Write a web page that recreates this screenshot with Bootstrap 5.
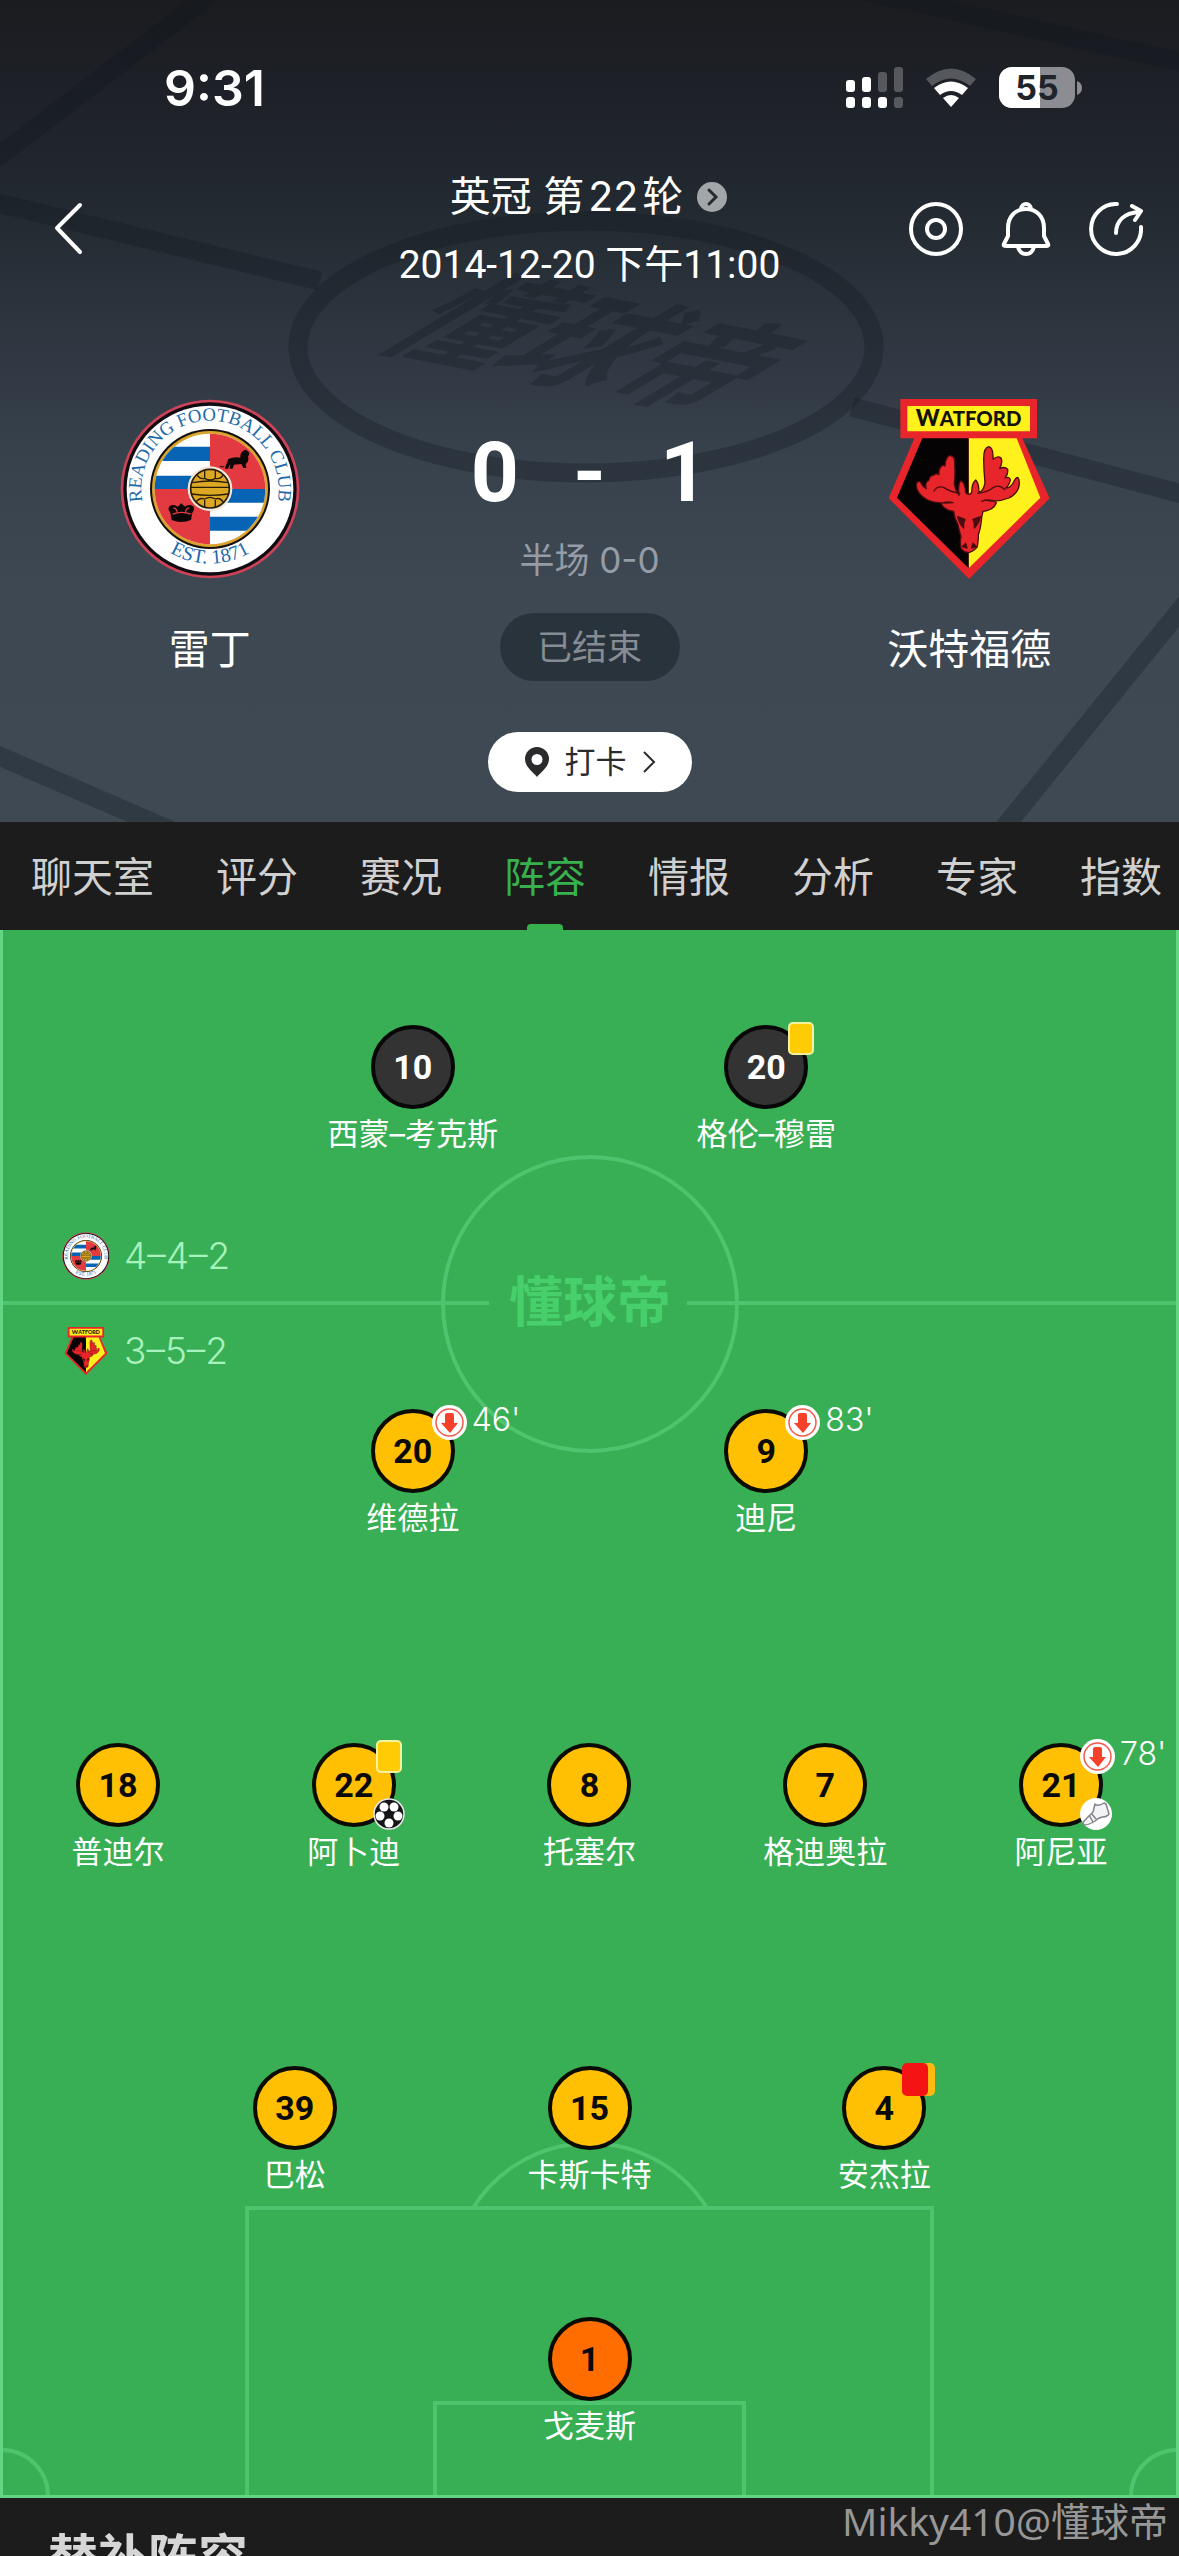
<!DOCTYPE html>
<html lang="zh-CN">
<head>
<meta charset="utf-8">
<meta name="viewport" content="width=device-width, initial-scale=1">
<title>雷丁 0 - 1 沃特福德</title>
<link href="https://cdn.jsdelivr.net/npm/bootstrap@5.3.0/dist/css/bootstrap.min.css" rel="stylesheet">
<style>
  body { background: #1c1c1c; color: #fff; font-family: Inter, "Noto Sans CJK SC", sans-serif; }
  .din { font-family: Roboto, "Noto Sans CJK SC", sans-serif; }

  .match-head { background: linear-gradient(#1a1c20 0, #1e2128 12%, #232a31 26%, #2e3640 41%, #38424d 56%, #3d4853 72%, #3e4954 100%); padding-bottom: 30px; }
  .head-art { position: absolute; inset: 0; width: 100%; height: 100%; }
  .status-bar { padding: 60px 97px 0 164px; height: 116px; }
  .clock { font-size: 50px; font-weight: 600; line-height: 56px; }
  .title-bar { margin-top: 44px; height: 138px; padding: 0 36px 0 48px; }
  .wing { flex: 1 1 0; min-width: 0; }
  .title-mid { padding: 4px 12px 0 0; }
  .title-line { line-height: 69px; }
  .league { font-size: 41px; }
  .kickoff { font-size: 39px; }
  .bare { background: none; border: 0; padding: 0; color: inherit; }
  .tools { gap: 36px; }
  .teams { margin-top: 101px; }
  .team-name { font-size: 41px; line-height: 60px; margin-top: 40px; }
  .mid { width: 340px; padding-top: 32px; }
  .score { font-size: 84px; font-weight: 700; line-height: 84px; gap: 54px; }
  .half { font-size: 35px; line-height: 50px; margin-top: 20px; color: #959ca5; }
  .state { font-size: 35px; line-height: 68px; width: 180px; margin-top: 28px; background: #29333b; color: #858c94; }
  .checkin { margin-top: 51px; height: 60px; width: 204px; font-size: 31px; background: #fff; color: #2b2b2d; gap: 15px; }

  .tabs { height: 108px; padding: 0 16px 0 31px; gap: 62px; background: #1c1c1c; font-size: 41px; }
  .tabs a { color: #d0d0d0; text-decoration: none; line-height: 110px; white-space: nowrap; }
  .tabs a.on { color: #37b04d; position: relative; }
  .tabs a.on::after { content: ""; position: absolute; left: 50%; top: 102px; width: 36px; height: 6px; margin-left: -18px; border-radius: 4px 4px 0 0; background: #37b04d; }

  .pitch { background: #38af54; padding: 95px 0 54px; }
  .markings { position: absolute; left: 0; top: 0; width: 100%; height: 100%; }
  .line2 > div { width: 30%; }
  .line3 > div { width: 25%; }
  .line5 > div { width: 20%; }
  .gap-a { margin-top: 34px; }
  .gap-b { margin-top: 207px; }
  .gap-c { margin-top: 196px; }
  .gap-d { margin-top: 124px; }
  .shirt { width: 84px; height: 84px; border: 4px solid #0b0b05; border-radius: 50%; background: #ffc003; color: #0a0a0a; font-size: 34px; font-weight: 700; line-height: 76px; text-align: center; position: relative; }
  .shirt.dark { background: #333; color: #fff; border-color: #070707; }
  .shirt.keeper { background: #ff6d00; }
  .pname { font-size: 31px; line-height: 36px; margin-top: 7px; white-space: nowrap; }
  .ycard, .rcard { position: absolute; width: 26px; height: 33px; left: 60px; top: -7px; border: 2px solid #f3f2a0; border-radius: 5px; background: #ffcb05; }
  .rcard { left: 56px; border: 0; background: #f41414; box-shadow: 7px 0 0 #ffb90f; }
  .subout { position: absolute; left: 57px; top: -8px; }
  .extra { position: absolute; left: 57px; top: 51px; }
  .minute { position: absolute; left: 97px; top: -11px; font-family: Inter, sans-serif; font-size: 32px; line-height: 36px; font-weight: 300; color: #fff; white-space: nowrap; }

  .shapes { margin-top: 80px; padding-left: 62px; gap: 47px; }
  .shape-line { gap: 14px; font-size: 37px; line-height: 48px; font-weight: 300; color: #a8f3bd; }
  .subs { padding: 30px 48px 0; background: #1c1c1c; }
  .subs h2 { font-size: 50px; line-height: 60px; font-weight: 700; color: #d6d6d6; }
  .stamp { position: absolute; right: 11px; bottom: 9px; font-family: "Noto Sans", "Noto Sans CJK SC", sans-serif; font-size: 39px; line-height: 52px; color: #979797; }
</style>
<script src="https://cdn.jsdelivr.net/npm/bootstrap@5.3.0/dist/js/bootstrap.bundle.min.js"></script>
</head>
<body>
<svg class="position-absolute" width="0" height="0" aria-hidden="true">
  <defs>
    <clipPath id="rfcClip"><circle cx="330" cy="327" r="166"/></clipPath>
    <path id="rfcTop" d="M137 400 A206 206 0 1 1 523 400"/>
    <path id="rfcBottom" d="M130 440 A236 236 0 0 0 530 440"/>
  </defs>
  <symbol id="reading" viewBox="60 57 540 540">
    <circle cx="330" cy="327" r="268" fill="#cf4358"/>
    <circle cx="330" cy="327" r="260" fill="#110c12"/>
    <circle cx="330" cy="327" r="250" fill="#fff"/>
    <circle cx="330" cy="327" r="180" fill="#14110c"/>
    <circle cx="330" cy="327" r="174" fill="#d9a32c"/>
    <g clip-path="url(#rfcClip)">
      <path fill="#fff" d="M150 150h360v360H150z"/>
      <path fill="#e33a41" d="M330 150h180v177H330zM150 327h180v180H150z"/>
      <path fill="#0763b4" d="M150 200h180v43H150zM150 287h180v40H150zM330 327h180v41H330zM330 410h180v42H330z"/>
    </g>
    <g fill="#0d0708">
      <path d="M362 257q12 6 18-6l5-14q18-7 36-4q-1-14 8-20l6-4q13 4 13 13l-4 8q4 8-1 16l-6 6l2 12h-9l-6-12l-22 2l-4 12h-9l2-14l-7 14h-9l4-14q-3 6-7 8q-6 4-14-1z"/>
      <path d="M211 398q-12-14 2-22q12-4 20 4q4-4 8-5l-2-4h10l-2 4q6 1 8 5q8-8 20-4q14 8 2 22l-4 22q-29 12-58 0z"/>
      <path d="M218 402q27-10 54 0M220 384q10 0 12 14M268 384q-10 0-12 14" fill="none" stroke="#e33a41" stroke-width="4"/>
    </g>
    <circle cx="330" cy="326" r="67" fill="#efe6d4"/>
    <circle cx="330" cy="326" r="58" fill="#dca824" stroke="#2a1c08" stroke-width="5"/>
    <path d="M277 308q53-10 106 0M272 322h116M275 342q55 8 110 0M290 283q10 16 24 12q16 10 32 0q16 4 24-12M288 367q10-16 26-10q16-10 32 0q14-6 24 10M314 270v24M346 270v24M314 360v22M346 360v22" fill="none" stroke="#2a1c08" stroke-width="4"/>
    <g font-family="Liberation Serif, serif" fill="#1e6aa8" text-anchor="middle">
      <text font-size="56"><textPath href="#rfcTop" startOffset="50%">READING FOOTBALL CLUB</textPath></text>
      <text font-size="60"><textPath href="#rfcBottom" startOffset="50%">EST. 1871</textPath></text>
    </g>
  </symbol>
  <symbol id="watford" viewBox="58 57 540 540">
    <path fill="#e8252b" d="M122 57h410v118h-44l82 180l-242 242L87 355l77-180h-42z"/>
    <path fill="#fff11c" d="M143 78h368v76H143zM327 175h144l71 178L327 565z"/>
    <path fill="#050304" d="M327 175H188l-76 178L327 565z"/>
    <text x="327" y="138" font-family="Lato, sans-serif" font-weight="900" fill="#15110b" text-anchor="middle" font-size="61"><tspan font-size="68">W</tspan>ATFORD</text>
    <g fill="#e8252b" stroke="#4a0d10" stroke-width="4" stroke-linejoin="round">
      <path d="M298 346q-4-28 4-44q14 2 16 36q8 10 18 0q0-28 12-38q10 10 10 38q14-6 18-30q-4-40-4-72q0-34 16-36q14 4 12 38q14-12 24-4q6 12-4 32q14-8 24 2q2 14-8 26q14-6 16 6q-2 14-14 24q16 0 26-22q10-18 14-2q6 34-30 54q-34 14-72 6l-10 4q28-10 44 4q-8 22-40 26q-4 14-6 36q-2 18-8 34q0 24-4 38q-10 12-24 16q-18-2-24-14q-4-14 0-34q-6-20-10-38q-10-16-12-38q-30-4-38-24q18-8 36-2q-48 4-76-8q-36-20-34-48q6-16 16 0q4 10 14 14q-6-18 8-26q2-14 14-14q8-8 16-2q-2-18 8-26q6-4 10 0q0-16 8-28q12-8 20 6q4 40 0 76q4 20 12 30z"/>
      <path d="M222 334q10-18 30-12q20 14 50 18M436 330q-16-18-34-8q-18 16-50 18" fill="none"/>
      <path fill="#4a0d10" d="M294 410l22 8q-6 12-4 26q-12-10-18-34zM362 410l-22 8q6 12 4 26q12-10 18-34zM308 500l10-10l4 14zM350 500l-10-10l-4 14z"/>
    </g>
  </symbol>
  <symbol id="down" viewBox="0 0 35 35">
    <circle cx="17.500" cy="17.500" r="17.500" fill="#fff"/>
    <circle cx="17.500" cy="17.500" r="13.500" fill="none" stroke="#f4584a" stroke-width="1.500"/>
    <path fill="#f5402a" d="M13 10q0-2 2-2h5q2 0 2 2v8h4l-8 10l-9-10h4z"/>
  </symbol>
</svg>

<main class="d-flex flex-column vh-100 overflow-hidden position-relative">

  <header class="match-head position-relative flex-shrink-0">
    <svg class="head-art" viewBox="0 0 1179 822" preserveAspectRatio="xMidYMid slice" aria-hidden="true">
      <g fill="none" stroke="#12161e" stroke-opacity=".3" stroke-width="19">
        <path d="M216-10L-10 163"/>
        <path d="M860-10L1190 64"/>
        <path d="M-10 201L320 281"/>
        <path d="M852 407L1190 496"/>
        <path d="M-10 752L170 830"/>
        <path d="M1002 830L1190 598"/>
        <ellipse cx="586" cy="347" rx="288" ry="126"/>
      </g>
      <g transform="translate(590 347) rotate(11) skewX(-48)">
        <text y="38" font-family="Noto Sans CJK SC, sans-serif" font-weight="700" font-size="114" text-anchor="middle" fill="#12161e" fill-opacity=".28">懂球帝</text>
      </g>
    </svg>

    <div class="position-relative">
      <div class="status-bar d-flex justify-content-between align-items-center">
        <div class="clock">9:31</div>
        <svg width="236" height="42" viewBox="846 67 236 42" aria-label="信号 Wi-Fi 电量55">
          <g fill="#fff">
            <rect x="846" y="80" width="9" height="12" rx="3"/><rect x="862" y="77" width="9" height="15" rx="3"/>
            <g opacity=".25"><rect x="878" y="72" width="9" height="20" rx="3"/><rect x="894" y="67" width="9" height="25" rx="3"/><rect x="894" y="97" width="9" height="11" rx="3"/></g>
            <rect x="846" y="97" width="9" height="11" rx="3"/><rect x="862" y="97" width="9" height="11" rx="3"/><rect x="878" y="97" width="9" height="11" rx="3"/>
            <path opacity=".25" d="M926 79q25-21 50 0l-6 7q-19-15-38 0z"/>
            <path d="M934 88q17-13 34 0l-6 7q-11-8-22 0zM943 98q8-6 16 0l-8 9z"/>
          </g>
          <rect x="999" y="67" width="76" height="41" rx="13" fill="#8b8d92"/>
          <path fill="#fff" d="M1012 67h28v41h-28a13 13 0 0 1-13-13V80a13 13 0 0 1 13-13z"/>
          <path fill="#8b8d92" d="M1077 81q5 2 5 7t-5 7z"/>
          <text x="1037" y="100" text-anchor="middle" font-family="Inter, sans-serif" font-weight="700" font-size="34" fill="#1f232a">55</text>
        </svg>
      </div>

      <div class="title-bar d-flex align-items-center">
        <div class="wing">
          <button class="bare d-block" aria-label="返回"><svg class="d-block" width="40" height="54" viewBox="0 0 40 54" fill="none" stroke="#fff" stroke-width="4" stroke-linecap="round" stroke-linejoin="round"><path d="M32 3L9 26L32 50"/></svg></button>
        </div>
        <div class="title-mid text-center">
          <div class="title-line league d-flex align-items-center justify-content-center"><span>英冠 第<span class="mx-1">22</span>轮</span>
            <svg class="ms-2 ps-1" width="38" height="30" viewBox="0 0 34 30"><circle cx="17" cy="15" r="15" fill="#a3a6a9"/><path d="M14 8l7 7l-7 7" fill="none" stroke="#252b31" stroke-width="3" stroke-linecap="round"/></svg>
          </div>
          <div class="title-line kickoff din">2014-12-20 下午11:00</div>
        </div>
        <div class="tools wing d-flex justify-content-end">
          <button class="bare" aria-label="直播"><svg class="d-block" width="54" height="54" viewBox="0 0 54 54" fill="none" stroke="#fff" stroke-width="4"><circle cx="27" cy="27" r="25"/><circle cx="27" cy="27" r="9"/></svg></button>
          <button class="bare" aria-label="提醒"><svg class="d-block" width="54" height="54" viewBox="0 0 54 54" fill="none" stroke="#fff" stroke-width="4" stroke-linejoin="round"><path d="M27 7C16 7 9 15 9 26v8L5 42q-1 2 2 2h40q3 0 2-2l-4-8v-8C45 15 38 7 27 7z"/><path d="M22 7q1-5 5-5t5 5M19 45q2 7 8 7t8-7"/></svg></button>
          <button class="bare" aria-label="分享"><svg class="d-block" width="54" height="54" viewBox="0 0 54 54" fill="none" stroke="#fff" stroke-width="4" stroke-linecap="round" stroke-linejoin="round"><path d="M28 2A25 25 0 1 0 52 25"/><path d="M27 31C27 19 35 11 50 10M43 4l9 5l-6 9"/></svg></button>
        </div>
      </div>

      <section class="teams d-flex text-center">
        <div class="wing">
          <svg class="d-block mx-auto" width="180" height="180" role="img" aria-label="雷丁队徽"><use href="#reading"/></svg>
          <div class="team-name">雷丁</div>
        </div>
        <div class="mid d-flex flex-column align-items-center flex-shrink-0">
          <div class="score din d-flex"><span>0</span><span>-</span><span>1</span></div>
          <div class="half">半场 0-0</div>
          <div class="state rounded-pill">已结束</div>
        </div>
        <div class="wing">
          <svg class="d-block mx-auto" width="180" height="180" role="img" aria-label="沃特福德队徽"><use href="#watford"/></svg>
          <div class="team-name">沃特福德</div>
        </div>
      </section>

      <button class="bare checkin rounded-pill d-flex align-items-center justify-content-center mx-auto">
        <svg width="26" height="32" viewBox="0 0 26 32"><path fill="#2b2b2d" fill-rule="evenodd" d="M13 1A12 12 0 0 0 1 13c0 8 8 13 12 18c4-5 12-10 12-18A12 12 0 0 0 13 1zm0 7a5.500 5.500 0 1 1 0 11a5.500 5.500 0 0 1 0-11z"/></svg>
        <span>打卡</span>
        <svg width="14" height="24" viewBox="0 0 14 24" fill="none" stroke="#2b2b2d" stroke-width="2"><path d="M2 2l10 10L2 22"/></svg>
      </button>
    </div>
  </header>

  <nav class="tabs d-flex flex-shrink-0 overflow-hidden">
    <a href="#">聊天室</a><a href="#">评分</a><a href="#">赛况</a><a href="#" class="on" aria-current="page">阵容</a><a href="#">情报</a><a href="#">分析</a><a href="#">专家</a><a href="#">指数</a>
  </nav>

  <section class="pitch position-relative flex-shrink-0">
    <svg class="markings" viewBox="0 0 1179 1568" preserveAspectRatio="xMidYMax slice" aria-hidden="true">
      <g fill="none" stroke="#4fc36d" stroke-width="4">
        <path d="M3 373H489M687 373H1176"/>
        <circle cx="590" cy="374" r="147"/>
        <path d="M247 1565V1278H932V1565M435 1565V1473H744V1565M473 1278A138 138 0 0 1 707 1278"/>
        <path d="M3 1520A46 46 0 0 1 48 1565M1176 1520A46 46 0 0 0 1131 1565"/>
      </g>
      <path d="M1.500 0V1566.500H1177.500V0" fill="none" stroke="#63d583" stroke-width="3"/>
      <text x="590" y="392" text-anchor="middle" font-family="Noto Sans CJK SC, sans-serif" font-weight="700" font-size="54" fill="#46cf6b">懂球帝</text>
    </svg>

    <div class="position-relative">
      <div class="line2 d-flex justify-content-center">
        <div class="d-flex flex-column align-items-center"><div class="shirt din dark">10</div><div class="pname">西蒙–考克斯</div></div>
        <div class="d-flex flex-column align-items-center"><div class="shirt din dark">20<i class="ycard"></i></div><div class="pname">格伦–穆雷</div></div>
      </div>

      <div class="shapes d-flex flex-column">
        <div class="shape-line d-flex align-items-center"><svg width="48" height="48"><use href="#reading"/></svg>4–4–2</div>
        <div class="shape-line d-flex align-items-center"><svg width="48" height="48"><use href="#watford"/></svg>3–5–2</div>
      </div>

      <div class="line2 gap-a d-flex justify-content-center">
        <div class="d-flex flex-column align-items-center"><div class="shirt din">20<svg class="subout" width="35" height="35"><use href="#down"/></svg><span class="minute">46'</span></div><div class="pname">维德拉</div></div>
        <div class="d-flex flex-column align-items-center"><div class="shirt din">9<svg class="subout" width="35" height="35"><use href="#down"/></svg><span class="minute">83'</span></div><div class="pname">迪尼</div></div>
      </div>

      <div class="line5 gap-b d-flex justify-content-center">
        <div class="d-flex flex-column align-items-center"><div class="shirt din">18</div><div class="pname">普迪尔</div></div>
        <div class="d-flex flex-column align-items-center"><div class="shirt din">22<i class="ycard"></i>
          <svg class="extra" width="32" height="32" viewBox="0 0 32 32"><circle cx="16" cy="16" r="15" fill="#151518" stroke="#e8e8ea" stroke-width="1.500"/><g fill="#fff"><circle cx="11" cy="9" r="4.500"/><circle cx="21" cy="9" r="4.500"/><circle cx="7" cy="18" r="4.500"/><circle cx="25" cy="18" r="4.500"/><circle cx="16" cy="25" r="4.500"/></g></svg></div><div class="pname">阿卜迪</div></div>
        <div class="d-flex flex-column align-items-center"><div class="shirt din">8</div><div class="pname">托塞尔</div></div>
        <div class="d-flex flex-column align-items-center"><div class="shirt din">7</div><div class="pname">格迪奥拉</div></div>
        <div class="d-flex flex-column align-items-center"><div class="shirt din">21<svg class="subout" width="35" height="35"><use href="#down"/></svg><span class="minute">78'</span>
          <svg class="extra" width="32" height="32" viewBox="0 0 32 32"><circle cx="16" cy="16" r="16" fill="#fff"/><path d="M15 6q3 3 9-1l2 1l3 10q-2 3-7 3q-4 1-7 4q-6 4-11 4q-2-2 0-4l9-9zM9 17l4 7M11 15l5 6" fill="#f3f3f5" stroke="#85838c" stroke-width="1.500" stroke-linejoin="round"/></svg></div><div class="pname">阿尼亚</div></div>
      </div>

      <div class="line3 gap-c d-flex justify-content-center">
        <div class="d-flex flex-column align-items-center"><div class="shirt din">39</div><div class="pname">巴松</div></div>
        <div class="d-flex flex-column align-items-center"><div class="shirt din">15</div><div class="pname">卡斯卡特</div></div>
        <div class="d-flex flex-column align-items-center"><div class="shirt din">4<i class="rcard"></i></div><div class="pname">安杰拉</div></div>
      </div>

      <div class="line3 gap-d d-flex justify-content-center">
        <div class="d-flex flex-column align-items-center"><div class="shirt din keeper">1</div><div class="pname">戈麦斯</div></div>
      </div>
    </div>
  </section>

  <section class="subs flex-shrink-0"><h2 class="m-0">替补阵容</h2></section>
  <div class="stamp">Mikky410@懂球帝</div>
</main>
</body>
</html>
